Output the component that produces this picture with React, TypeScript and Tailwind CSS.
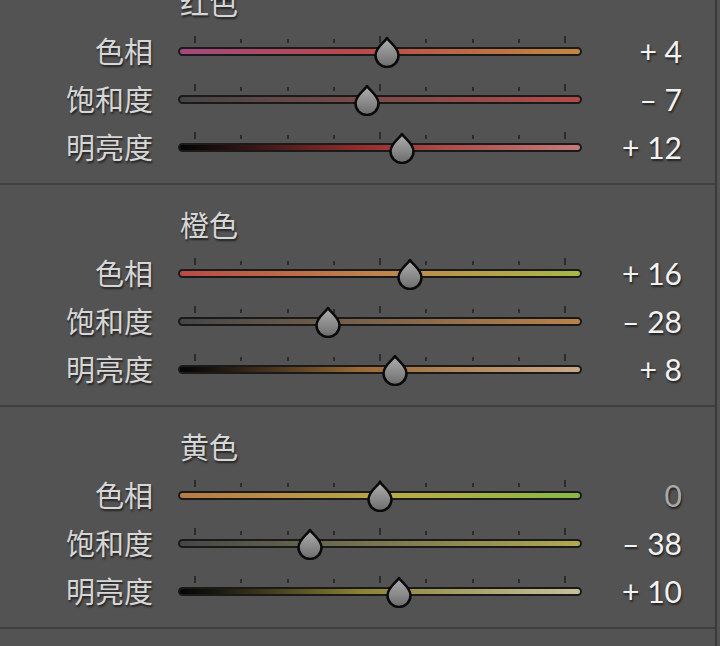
import React from "react";

type Row = { label: string; value: number; track: string };
type Section = { title: string; rows: Row[] };

const sections: Section[] = [
  {
    title: "红色",
    rows: [
      { label: "色相", value: 4, track: "bg-linear-to-r from-[#a4487e] via-[#b84a4a] via-45% to-[#c2883e]" },
      { label: "饱和度", value: -7, track: "bg-linear-to-r from-[#454545] to-[#b44a4a]" },
      { label: "明亮度", value: 12, track: "bg-linear-to-r from-[#050505] via-[#952d2d] via-45% to-[#c87a7a]" },
    ],
  },
  {
    title: "橙色",
    rows: [
      { label: "色相", value: 16, track: "bg-linear-to-r from-[#b84a46] via-[#c0844a] via-50% to-[#a6b848]" },
      { label: "饱和度", value: -28, track: "bg-linear-to-r from-[#464646] to-[#bb8248]" },
      { label: "明亮度", value: 8, track: "bg-linear-to-r from-[#050505] via-[#9a6a35] via-45% to-[#caa888]" },
    ],
  },
  {
    title: "黄色",
    rows: [
      { label: "色相", value: 0, track: "bg-linear-to-r from-[#b87a46] via-[#b8aa48] via-55% to-[#86b848]" },
      { label: "饱和度", value: -38, track: "bg-linear-to-r from-[#464646] to-[#b2aa50]" },
      { label: "明亮度", value: 10, track: "bg-linear-to-r from-[#050505] via-[#8c8232] via-45% to-[#c8c29c]" },
    ],
  },
];

const ticks = [true, false, false, false, true, false, false, false, true];

const Thumb = () => (
  <svg width="30" height="32" viewBox="0 0 30 32">
    <defs>
      <linearGradient id="thumbFill" x1="0" y1="0" x2="0" y2="1">
        <stop offset="0" stopColor="#b0b0b0" />
        <stop offset="1" stopColor="#6c6c6c" />
      </linearGradient>
    </defs>
    <path
      d="M15 2 C18 7, 26.5 11.5, 26.5 19.5 A11.5 11.5 0 0 1 3.5 19.5 C3.5 11.5, 12 7, 15 2 Z"
      fill="url(#thumbFill)"
      stroke="#0a0a0a"
      strokeWidth="2.5"
      strokeLinejoin="round"
    />
  </svg>
);

const formatValue = (v: number) => {
  if (v === 0) return "0";
  return v > 0 ? `+ ${v}` : `– ${Math.abs(v)}`;
};

const SliderRow = ({ row }: { row: Row }) => {
  const left = 202 + row.value * 1.855 - 15;
  return (
    <div className="flex h-[48px] items-center">
      <div className="w-[153px] -mt-[2px] text-right text-[29px] leading-none text-[#d6d6d6] [text-shadow:1px_2px_2px_rgba(0,0,0,0.6)]">
        {row.label}
      </div>
      <div className="relative ml-[25px] flex h-full w-[404px] flex-col">
        <div className="mx-[16px] mt-[9px] flex h-[7px] items-end justify-between">
          {ticks.map((tall, i) => (
            <span key={i} className={tall ? "h-[7px] w-[2px] bg-[#2c2c2c]" : "h-[4px] w-[2px] bg-[#2c2c2c]"} />
          ))}
        </div>
        <div className={`mt-[4px] h-[9px] rounded-full border-2 border-[#1a1a1a] ${row.track}`} />
        <div className="absolute top-[9px]" style={{ left }}>
          <Thumb />
        </div>
      </div>
      <div
        className={`w-[100px] text-right font-['Lato',sans-serif] text-[30px] leading-none [text-shadow:1px_2px_2px_rgba(0,0,0,0.6)] ${
          row.value === 0 ? "text-[#a9a9a9]" : "text-[#f2f2f2]"
        }`}
      >
        {formatValue(row.value)}
      </div>
    </div>
  );
};

export default function App() {
  return (
    <div className="flex h-[646px] w-[720px] overflow-hidden bg-[#535353] font-['Noto_Sans_CJK_SC','Noto_Sans',sans-serif]">
      <div className="w-[715px]">
        <div className="-mt-[39px]">
          {sections.map((s) => (
            <section key={s.title} className="h-[222px]">
              <div className="h-[2px] bg-[#3f3f3f]" />
              <div className="h-[64px] pt-[24px] pl-[180px] text-[29px] leading-[30px] text-[#d6d6d6] [text-shadow:1px_2px_2px_rgba(0,0,0,0.6)]">
                {s.title}
              </div>
              {s.rows.map((r) => (
                <SliderRow key={r.label} row={r} />
              ))}
            </section>
          ))}
          <div className="h-[2px] bg-[#3f3f3f]" />
        </div>
      </div>
      <div className="w-[2px] bg-[#3a3a3a]" />
      <div className="flex-1" />
    </div>
  );
}
